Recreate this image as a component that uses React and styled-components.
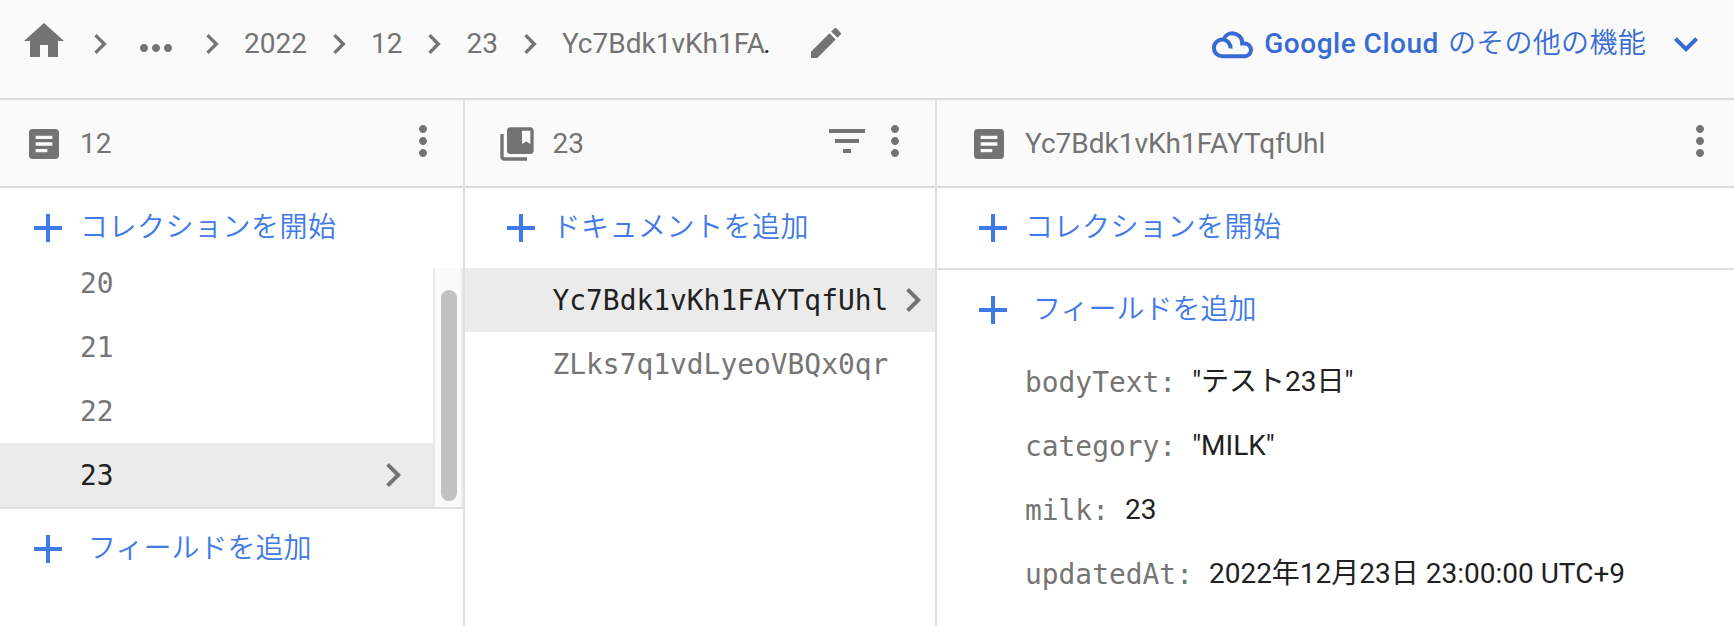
import React, { useState } from 'react';
import styled, { createGlobalStyle } from 'styled-components';
import {
  MdHome,
  MdChevronRight,
  MdMoreHoriz,
  MdMoreVert,
  MdEdit,
  MdExpandMore,
  MdArticle,
  MdCollectionsBookmark,
  MdFilterList,
  MdAdd,
} from 'react-icons/md';

const sans = `Roboto, 'Noto Sans CJK JP', sans-serif`;
const mono = `'DejaVu Sans Mono', 'Liberation Mono', monospace`;

const days = ['20', '21', '22', '23'];
const documents = ['Yc7Bdk1vKh1FAYTqfUhl', 'ZLks7q1vdLyeoVBQx0qr'];
const fields = [
  { name: 'bodyText', value: '"テスト23日"' },
  { name: 'category', value: '"MILK"' },
  { name: 'milk', value: '23' },
  { name: 'updatedAt', value: '2022年12月23日 23:00:00 UTC+9' },
];

const CloudIcon = () => (
  <svg width="43" height="29" viewBox="0 0 43 29">
    <path
      d="M12.4 9.6 A9.8 9.8 0 0 1 31.2 11.6 V13.6 H33.7 A6.3 6.3 0 0 1 33.7 26.2 H11 A8.3 8.3 0 1 1 19.5 18.5"
      fill="none"
      stroke="currentColor"
      strokeWidth="4"
    />
  </svg>
);

const AddButton = ({ title, field }) => (
  <AddRow>
    <MdAdd size={48} />
    <AddLabel $field={field}>{title}</AddLabel>
  </AddRow>
);

const ListItem = ({ name, selected, onSelect, flush }) => (
  <Item $selected={selected} onClick={onSelect}>
    <ItemName>{name}</ItemName>
    {selected && (
      <ItemArrow $flush={flush}>
        <MdChevronRight size={48} />
      </ItemArrow>
    )}
  </Item>
);

function App() {
  const [day, setDay] = useState('23');
  const [documentId, setDocumentId] = useState(documents[0]);

  return (
    <>
      <GlobalStyle />
      <Page>
        <TopBar>
          <Breadcrumbs>
            <HomeIcon>
              <MdHome size={48} />
            </HomeIcon>
            <MdChevronRight size={40} />
            <MoreCrumbs>
              <MdMoreHoriz size={48} />
            </MoreCrumbs>
            <MdChevronRight size={40} />
            <Crumb>2022</Crumb>
            <MdChevronRight size={40} />
            <Crumb>12</Crumb>
            <MdChevronRight size={40} />
            <Crumb>23</Crumb>
            <MdChevronRight size={40} />
            <Crumb>
              Yc7Bdk1vKh1FA<Cut>.</Cut>
            </Crumb>
            <EditButton>
              <MdEdit size={40} />
            </EditButton>
          </Breadcrumbs>
          <CloudMenu>
            <CloudIcon />
            <CloudLabel>
              <strong>Google Cloud</strong> のその他の機能
            </CloudLabel>
            <MdExpandMore size={48} />
          </CloudMenu>
        </TopBar>

        <Panels>
          <Panel>
            <PanelHeader $left={24}>
              <PanelIcon>
                <MdArticle size={40} />
              </PanelIcon>
              <PanelTitle>12</PanelTitle>
              <PanelActions>
                <MdMoreVert size={48} />
              </PanelActions>
            </PanelHeader>
            <AddButton title="コレクションを開始" />
            <ScrollArea>
              <ScrollList>
                {days.map((name) => (
                  <ListItem
                    key={name}
                    name={name}
                    selected={name === day}
                    onSelect={() => setDay(name)}
                  />
                ))}
              </ScrollList>
              <ScrollTrack>
                <ScrollThumb />
              </ScrollTrack>
            </ScrollArea>
            <AddButton title="フィールドを追加" field />
          </Panel>

          <Panel>
            <PanelHeader $left={31.5}>
              <PanelIcon>
                <MdCollectionsBookmark size={40} />
              </PanelIcon>
              <PanelTitle>23</PanelTitle>
              <PanelActions>
                <MdFilterList size={48} />
                <MdMoreVert size={48} />
              </PanelActions>
            </PanelHeader>
            <Indented $left={7.5}>
              <AddButton title="ドキュメントを追加" />
            </Indented>
            {documents.map((name) => (
              <DocumentRow key={name}>
                <ListItem
                  name={name}
                  selected={name === documentId}
                  onSelect={() => setDocumentId(name)}
                  flush
                />
              </DocumentRow>
            ))}
          </Panel>

          <Panel>
            <PanelHeader $left={32} $right={10}>
              <PanelIcon>
                <MdArticle size={40} />
              </PanelIcon>
              <PanelTitle>Yc7Bdk1vKh1FAYTqfUhl</PanelTitle>
              <PanelActions>
                <MdMoreVert size={48} />
              </PanelActions>
            </PanelHeader>
            <Indented $left={8} $divider>
              <AddButton title="コレクションを開始" />
            </Indented>
            <Indented $left={8}>
              <AddButton title="フィールドを追加" field />
            </Indented>
            {fields.map((item) => (
              <Field key={item.name}>
                <FieldName>{item.name}:</FieldName>
                <FieldValue>{item.value}</FieldValue>
              </Field>
            ))}
          </Panel>
        </Panels>
      </Page>
    </>
  );
}

export default App;

// Styled Components
const GlobalStyle = createGlobalStyle`
  * {
    box-sizing: border-box;
  }

  body {
    margin: 0;
    overflow: hidden;
    background: #fff;
  }

  svg {
    display: block;
    flex-shrink: 0;
  }
`;

const Page = styled.div`
  display: flex;
  flex-direction: column;
  width: 1734px;
  height: 626px;
  font-family: ${sans};
  font-size: 28px;
  line-height: 40px;
  color: #737373;
  white-space: nowrap;
`;

const TopBar = styled.header`
  display: flex;
  justify-content: space-between;
  height: 100px;
  padding: 0 24px 12px 20px;
  background: #fafafa;
  border-bottom: 2px solid #dcdcdc;
`;

const Breadcrumbs = styled.nav`
  display: flex;
  align-items: center;
  gap: 12px;
  height: 88px;
`;

const HomeIcon = styled.div`
  padding-bottom: 6px;
`;

const MoreCrumbs = styled.div`
  padding-top: 8px;
`;

const Crumb = styled.span`
  padding-bottom: 1px;
`;

const Cut = styled.span`
  margin-left: -2px;
  color: #212121;
`;

const EditButton = styled.div`
  padding: 0 0 2px 23px;
`;

const CloudMenu = styled.div`
  display: flex;
  align-items: center;
  height: 88px;
  color: #376bd3;
`;

const CloudLabel = styled.span`
  margin: 0 16px 1px 10px;
  font-weight: 350;
  letter-spacing: 0.3px;

  strong {
    margin-right: 2px;
    font-weight: 500;
    letter-spacing: 0.5px;
  }
`;

const Panels = styled.main`
  display: grid;
  grid-template-columns: 465px 472px 797px;
  flex: 1;
`;

const Panel = styled.section`
  min-width: 0;
  border-right: 2px solid #e0e0e0;

  &:last-child {
    border-right: none;
  }
`;

const PanelHeader = styled.div`
  display: flex;
  align-items: center;
  height: 88px;
  padding-left: ${(props) => props.$left}px;
  padding-right: ${(props) => props.$right || 16}px;
  background: #fafafa;
  border-bottom: 2px solid #dcdcdc;
`;

const PanelIcon = styled.div`
  padding-top: 2px;
`;

const PanelTitle = styled.span`
  margin-left: 16px;
  padding-top: 2px;
`;

const PanelActions = styled.div`
  display: flex;
  margin-left: auto;
  padding-bottom: 4px;
`;

const AddRow = styled.div`
  display: flex;
  align-items: center;
  height: 80px;
  padding-left: 24px;
  color: #4079e8;
  cursor: pointer;
`;

const AddLabel = styled.span`
  margin-left: ${(props) => (props.$field ? 16 : 8)}px;
  font-weight: 350;
  letter-spacing: ${(props) => (props.$field ? 0 : '0.5px')};
`;

const Indented = styled.div`
  padding-left: ${(props) => props.$left}px;
  border-bottom: ${(props) => (props.$divider ? '2px solid #e0e0e0' : 'none')};
`;

const ScrollArea = styled.div`
  display: flex;
  height: 241px;
  border-bottom: 2px solid #e0e0e0;
`;

const ScrollList = styled.div`
  display: flex;
  flex-direction: column;
  justify-content: flex-end;
  flex: 1;
  overflow: hidden;
`;

const ScrollTrack = styled.div`
  width: 30px;
  padding: 22px 4px 6px 6px;
  background: #fafafa;
  border-left: 2px solid #e8e8e8;
  border-right: 2px solid #ededed;
`;

const ScrollThumb = styled.div`
  width: 16px;
  height: 211px;
  border-radius: 8px;
  background: #c1c1c1;
`;

const Item = styled.div`
  display: flex;
  align-items: center;
  justify-content: space-between;
  flex-shrink: 0;
  height: 64px;
  padding-left: 80px;
  font-family: ${mono};
  font-size: 27.9px;
  line-height: 28px;
  color: ${(props) => (props.$selected ? '#212121' : '#757575')};
  background: ${(props) => (props.$selected ? '#ebebeb' : 'transparent')};
  cursor: pointer;
`;

const ItemName = styled.span`
  padding-top: 2px;
`;

const ItemArrow = styled.div`
  margin-right: ${(props) => (props.$flush ? -1.5 : 16.5)}px;
  color: #737373;
`;

const DocumentRow = styled.div`
  ${Item} {
    padding-left: 87.5px;
  }
`;

const Field = styled.div`
  display: flex;
  align-items: center;
  gap: 16px;
  height: 64px;
  padding-left: 88px;
`;

const FieldName = styled.span`
  padding-top: 2px;
  font-family: ${mono};
  font-size: 27.9px;
  color: #757575;
`;

const FieldValue = styled.span`
  color: #212121;
`;
